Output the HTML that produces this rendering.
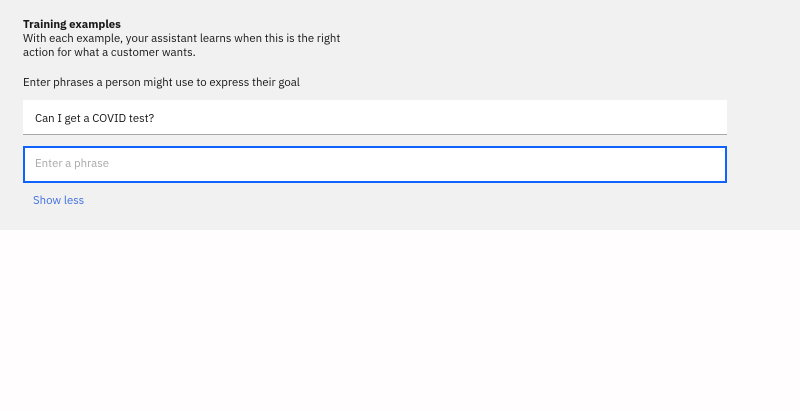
<!DOCTYPE html>
<html><head><style>
body{margin:0;width:800px;height:411px;background:#fffdfe;font-family:"IBM Plex Sans","Liberation Sans",sans-serif;color:#161616;overflow:hidden}
.g{position:absolute;left:0;top:0;width:800px;height:230px;background:#f2f1f2}
.t{position:absolute;font-size:11.4px;line-height:14px;left:23px;white-space:nowrap}
.b1{position:absolute;left:23px;top:100px;width:704px;height:34px;background:#fff;border-bottom:1px solid #a8a8a8}
.b2{position:absolute;left:23px;top:146px;width:700px;height:33px;background:#fff;border:2px solid #0f62fe}
</style></head><body>
<div class="g"></div>
<div class="t" style="top:18px;font-weight:bold">Training examples</div>
<div class="t" style="top:32px">With each example, your assistant learns when this is the right</div>
<div class="t" style="top:46px">action for what a customer wants.</div>
<div class="t" style="top:76px">Enter phrases a person might use to express their goal</div>
<div class="b1"></div>
<div class="t" style="top:112px;left:35px">Can I get a COVID test?</div>
<div class="b2"></div>
<div class="t" style="top:157px;left:35px;color:#a8a8a8">Enter a phrase</div>
<div class="t" style="top:194px;left:33px;color:#3e6fe0">Show less</div>
</body></html>
